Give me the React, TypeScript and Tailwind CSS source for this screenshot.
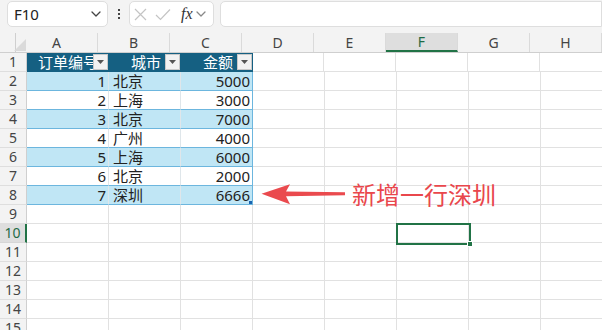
import React from 'react';

const cols = ['A', 'B', 'C', 'D', 'E', 'F', 'G', 'H'];
const colW = ['w-[82px]', 'w-[72px]', 'w-[72px]', 'w-[72px]', 'w-[72px]', 'w-[72px]', 'w-[72px]', 'w-[72px]'];

const orders = [
  { id: 1, city: '北京', amount: 5000 },
  { id: 2, city: '上海', amount: 3000 },
  { id: 3, city: '北京', amount: 7000 },
  { id: 4, city: '广州', amount: 4000 },
  { id: 5, city: '上海', amount: 6000 },
  { id: 6, city: '北京', amount: 2000 },
  { id: 7, city: '深圳', amount: 6666 },
];

function FilterBtn() {
  return (
    <div className="absolute right-[1px] top-[1px] w-[15px] h-[16px] bg-[#f2f2f2] border border-[#c9c9c9] flex items-center justify-center">
      <svg width="7" height="4" viewBox="0 0 7 4">
        <polygon points="0,0 7,0 3.5,4" fill="#555" />
      </svg>
    </div>
  );
}

function Chevron({ color = '#555' }: { color?: string }) {
  return (
    <svg width="10" height="6" viewBox="0 0 10 6" fill="none">
      <path d="M1 1l4 4 4-4" stroke={color} strokeWidth="1.3" strokeLinecap="round" strokeLinejoin="round" />
    </svg>
  );
}

export default function App() {
  return (
    <div className="relative w-[602px] h-[330px] overflow-hidden bg-white text-[#222]" style={{ fontFamily: '"Noto Sans", "Noto Sans CJK SC", sans-serif' }}>
      {/* toolbar */}
      <div className="h-[33px] bg-[#f3f3f3] flex items-start pt-[1px]">
        <div className="ml-[7px] w-[101px] h-[26px] bg-white border border-[#dedede] rounded-[5px] flex items-center justify-between pl-[6px] pr-[6px]">
          <span className="text-[15px] leading-none">F10</span>
          <Chevron color="#444" />
        </div>
        <div className="w-[21px] h-[26px] flex flex-col items-center justify-center gap-[2px]">
          <span className="w-[2px] h-[2px] bg-[#444]" />
          <span className="w-[2px] h-[2px] bg-[#444]" />
          <span className="w-[2px] h-[2px] bg-[#444]" />
        </div>
        <div className="w-[85px] h-[26px] bg-white border border-[#dedede] rounded-[5px] flex items-center pl-[3px] gap-[7px]">
          <svg width="15" height="15" viewBox="0 0 15 15" fill="none">
            <path d="M2 2l11 11M13 2L2 13" stroke="#c4c4c4" strokeWidth="1.2" />
          </svg>
          <svg width="16" height="13" viewBox="0 0 16 13" fill="none">
            <path d="M1 7l4.5 4.5L15 1.5" stroke="#c4c4c4" strokeWidth="1.2" />
          </svg>
          <span className="ml-[3px] text-[16px] italic leading-none text-[#333]" style={{ fontFamily: '"Liberation Serif", serif' }}>fx</span>
          <span className="-ml-[4px]"><Chevron color="#888" /></span>
        </div>
        <div className="ml-[6px] flex-1 h-[26px] bg-white border border-[#dedede] rounded-l-[5px]" />
      </div>

      {/* column headers */}
      <div className="flex h-[20px] bg-[#f3f3f3] border-b border-[#cfcfcf]">
        <div className="w-[27px] border-r border-[#cfcfcf] relative">
          <svg className="absolute left-[14px] top-[6px]" width="12" height="12" viewBox="0 0 12 12">
            <polygon points="12,0 12,12 0,12" fill="#dadada" />
          </svg>
        </div>
        {cols.map((c, i) => (
          <div
            key={c}
            className={`${colW[i]} shrink-0 border-r border-[#dadada] flex items-center justify-center text-[14px] ${
              c === 'F' ? 'bg-[#dedede] text-[#1e6b45] border-b-2 border-b-[#217346]' : 'text-[#444]'
            }`}
          >
            {c}
          </div>
        ))}
      </div>

      {/* rows */}
      {Array.from({ length: 15 }, (_, r) => {
        const n = r + 1;
        const band = n >= 2 && n <= 8 && n % 2 === 0;
        const inTable = n >= 1 && n <= 8;
        const order = n >= 2 && n <= 8 ? orders[n - 2] : null;
        return (
          <div key={n} className="flex h-[19px] text-[15px] leading-none">
            <div
              className={`w-[27px] shrink-0 flex items-center justify-center text-[14px] border-b ${
                n === 10
                  ? 'bg-[#dedede] text-[#1e6b45] border-r-2 border-r-[#217346] border-b-[#d6d6d6]'
                  : 'bg-[#f3f3f3] text-[#444] border-r border-r-[#cfcfcf] border-b-[#dedede]'
              }`}
            >
              {n}
            </div>
            {cols.map((c, i) => {
              const tableCol = i < 3 && inTable;
              if (tableCol && n === 1) {
                const label = ['订单编号', '城市', '金额'][i];
                return (
                  <div key={c} className={`${colW[i]} shrink-0 relative bg-[#156082] text-white overflow-hidden flex items-center border-b border-[#156082] ${i === 0 ? 'pl-[11px]' : 'justify-end pr-[20px]'}`}>
                    <span className="whitespace-nowrap">{label}</span>
                    <FilterBtn />
                  </div>
                );
              }
              if (tableCol && order) {
                const value = i === 0 ? order.id : i === 1 ? order.city : order.amount;
                return (
                  <div
                    key={c}
                    className={`${colW[i]} shrink-0 relative flex items-center border-b border-b-[#6cb6de] ${
                      band ? 'bg-[#c0e6f5]' : 'bg-white'
                    } ${i === 2 ? 'border-r border-r-[#6cb6de]' : 'border-r border-r-[#dfe6ea]'} ${
                      i === 1 ? 'pl-[4px]' : 'justify-end pr-[2px]'
                    }`}
                  >
                    {value}
                    {n === 8 && i === 2 && (
                      <span className="absolute right-0 bottom-0 w-[3px] h-[3px] bg-[#1b64b0]" />
                    )}
                  </div>
                );
              }
              return (
                <div
                  key={c}
                  className={`${colW[i]} shrink-0 bg-white border-r border-b border-[#e1e1e1] ${n === 1 && i === 3 ? 'border-l border-l-[#156082] -ml-px' : ''}`}
                />
              );
            })}
          </div>
        );
      })}

      {/* annotation */}
      <svg className="absolute left-[258px] top-[180px]" width="92" height="30" viewBox="258 180 92 30">
        <polygon points="261.5,193.8 290,184.3 286,191.4 345,192.3 345,195.2 286,196.2 290,204.3" fill="#ea4a4e" />
      </svg>
      <div className="absolute left-[352px] top-[178px] text-[24px] leading-[32px] text-[#e9474c] whitespace-nowrap" style={{ fontFamily: '"Noto Sans CJK SC", sans-serif' }}>
        新增一行深圳
      </div>

      {/* selected cell F10 */}
      <div className="absolute left-[396px] top-[223px] w-[75px] h-[22px] border-2 border-[#217346]" />
      <div className="absolute left-[467px] top-[241px] w-[6px] h-[6px] bg-[#217346] border border-white" />
    </div>
  );
}
